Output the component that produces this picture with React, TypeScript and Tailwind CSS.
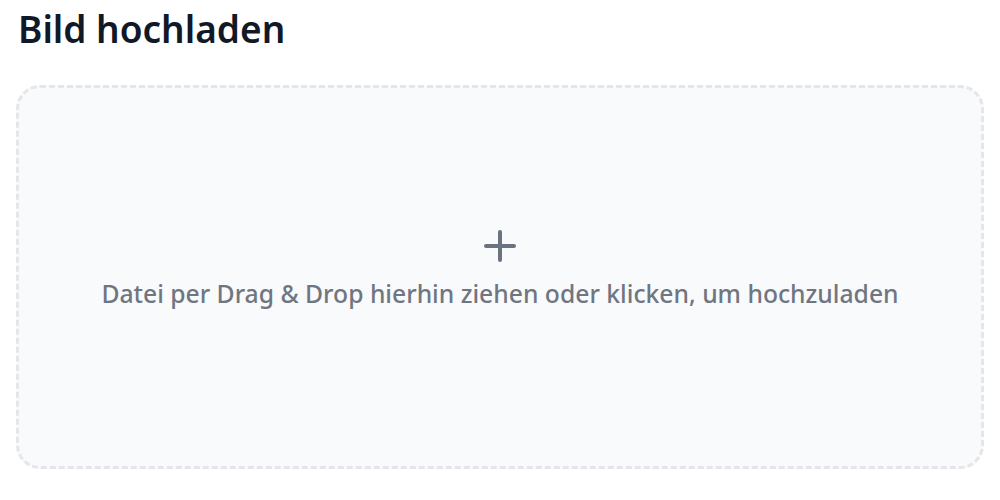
import { Plus } from "lucide-react"

export default function App() {
  return (
    <div
      className="w-[1000px] h-[500px] bg-white px-4 pt-[3px]"
      style={{ fontFamily: '"Noto Sans", "Open Sans", sans-serif' }}
    >
      <h1 className="text-[37px] leading-[52px] font-semibold text-[#111827] pl-[2px]">
        Bild hochladen
      </h1>
      <div className="mt-[30px] h-[384px] pb-[19px] rounded-[24px] border-[3px] border-dashed border-[#e4e6ea] bg-[#f9fafb] flex flex-col items-center justify-center cursor-pointer">
        <Plus className="w-12 h-12 text-[#6b7280]" strokeWidth={2} />
        <p className="mt-[5px] text-[24.7px] font-medium text-[#6f7681]">
          Datei per Drag &amp; Drop hierhin ziehen oder klicken, um hochzuladen
        </p>
      </div>
    </div>
  )
}
